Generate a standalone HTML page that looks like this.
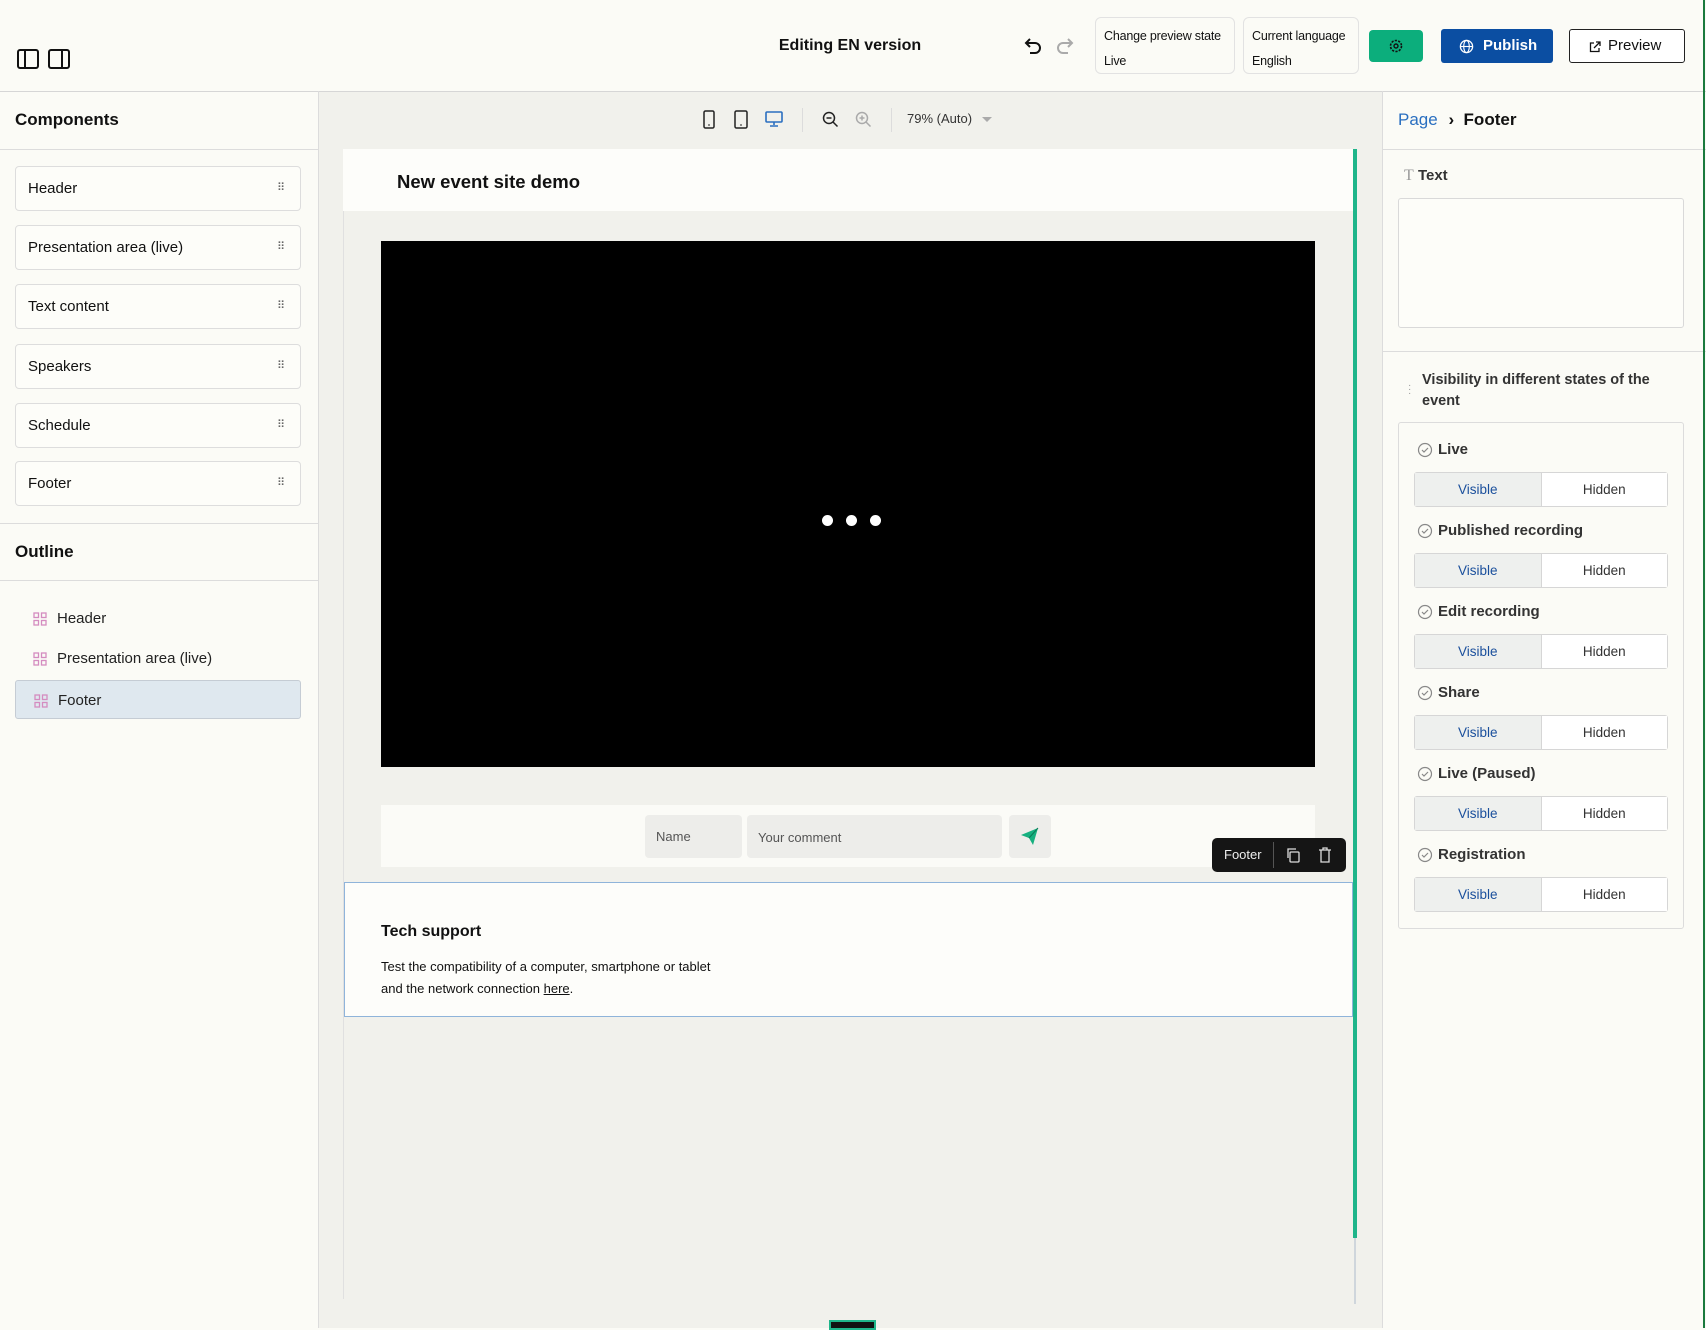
<!DOCTYPE html>
<html><head><meta charset="utf-8"><style>
*{box-sizing:border-box;margin:0;padding:0}
body{width:1706px;height:1328px;position:relative;overflow:hidden;font-family:"Liberation Sans",Arial,sans-serif;color:#111;background:#fbfbf6;font-size:15px}
.a{position:absolute}
.hl{position:absolute;height:1px;background:#dcdcdc}
.vl{position:absolute;width:1px;background:#dcdcdc}
.comp{position:absolute;left:15px;width:286px;height:45px;border:1px solid #ddd;border-radius:4px;background:#fdfdf9;padding:0 12px;line-height:43px;font-size:15px}
.comp .g{position:absolute;right:16px;top:0;font-size:11px;color:#666;letter-spacing:-1px}
.ol{position:absolute;left:15px;width:286px;height:39px;line-height:39px;padding-left:42px;font-size:15px;color:#222}
.ol svg{position:absolute;left:18px;top:13px}
.st{position:absolute;left:1417px;font-weight:bold;font-size:15px;color:#333;padding-left:21px}
.st svg{position:absolute;left:0;top:1px}
.seg{position:absolute;left:1414px;width:254px;height:35px;border:1px solid #d6d6d6;border-radius:3px;display:flex;font-size:13.5px}
.seg div{flex:1;text-align:center;line-height:33px}
.seg .v{background:#eef0ee;color:#1a4f9c;border-right:1px solid #d6d6d6}
.seg .h{background:#fff;color:#333}
.box{position:absolute;top:17px;height:57px;border:1px solid #e2e2e2;border-radius:6px;font-size:12.5px;padding:6px 8px;line-height:25px;white-space:nowrap;overflow:hidden;letter-spacing:-0.2px}
</style></head><body>
<!-- top bar -->
<svg class="a" style="left:17px;top:49px" width="22" height="20" viewBox="0 0 22 20"><rect x="1" y="1" width="20" height="18" rx="2" fill="none" stroke="#111" stroke-width="2"/><line x1="8" y1="1" x2="8" y2="19" stroke="#111" stroke-width="2"/></svg>
<svg class="a" style="left:48px;top:49px" width="22" height="20" viewBox="0 0 22 20"><rect x="1" y="1" width="20" height="18" rx="2" fill="none" stroke="#111" stroke-width="2"/><line x1="14" y1="1" x2="14" y2="19" stroke="#111" stroke-width="2"/></svg>
<div class="a" style="left:700px;top:37px;width:300px;text-align:center;font-weight:bold;font-size:16px">Editing EN version</div>
<svg class="a" style="left:1024px;top:36px" width="20" height="20" viewBox="0 0 20 20"><path d="M6 3L2 7l4 4" fill="none" stroke="#111" stroke-width="2"/><path d="M2 7h9a5 5 0 010 10H6" fill="none" stroke="#111" stroke-width="2"/></svg>
<svg class="a" style="left:1054px;top:36px" width="20" height="20" viewBox="0 0 20 20"><path d="M14 3l4 4-4 4" fill="none" stroke="#aaa" stroke-width="2"/><path d="M18 7H9a5 5 0 000 10h5" fill="none" stroke="#aaa" stroke-width="2"/></svg>
<div class="box" style="left:1095px;width:140px">Change preview state<br>Live</div>
<div class="box" style="left:1243px;width:116px">Current language<br>English</div>
<div class="a" style="left:1369px;top:30px;width:54px;height:32px;background:#0cae7c;border-radius:4px"></div>
<svg class="a" style="left:1388px;top:38px" width="16" height="16" viewBox="0 0 16 16"><circle cx="8" cy="8" r="5.5" fill="none" stroke="#111" stroke-width="1.6" stroke-dasharray="2.2 1.3"/><circle cx="8" cy="8" r="2" fill="none" stroke="#111" stroke-width="1.4"/></svg>
<div class="a" style="left:1441px;top:29px;width:112px;height:34px;background:#0b4ea2;border-radius:3px;color:#fff;font-weight:bold;font-size:15px;line-height:34px;padding-left:42px">Publish</div>
<svg class="a" style="left:1459px;top:39px" width="15" height="15" viewBox="0 0 16 16"><circle cx="8" cy="8" r="6.5" fill="none" stroke="#fff" stroke-width="1.4"/><ellipse cx="8" cy="8" rx="3" ry="6.5" fill="none" stroke="#fff" stroke-width="1.2"/><line x1="1.5" y1="8" x2="14.5" y2="8" stroke="#fff" stroke-width="1.2"/></svg>
<div class="a" style="left:1569px;top:29px;width:116px;height:34px;border:1px solid #222;border-radius:3px;background:#fff;font-size:15px;line-height:32px;padding-left:38px">Preview</div>
<svg class="a" style="left:1589px;top:41px" width="12" height="12" viewBox="0 0 12 12"><path d="M5 2H1.5v8.5H10V7M7 1h4v4M11 1L5 7" fill="none" stroke="#111" stroke-width="1.3"/></svg>
<div class="hl" style="left:0;top:91px;width:1706px;background:#d6d6d6"></div>

<!-- left panel -->
<div class="vl" style="left:318px;top:91px;height:1237px"></div>
<div class="a" style="left:15px;top:110px;font-weight:bold;font-size:17px">Components</div>
<div class="hl" style="left:0;top:149px;width:318px"></div>
<div class="comp" style="top:166px">Header<span class="g">⠿</span></div>
<div class="comp" style="top:225px">Presentation area (live)<span class="g">⠿</span></div>
<div class="comp" style="top:284px">Text content<span class="g">⠿</span></div>
<div class="comp" style="top:344px">Speakers<span class="g">⠿</span></div>
<div class="comp" style="top:403px">Schedule<span class="g">⠿</span></div>
<div class="comp" style="top:461px">Footer<span class="g">⠿</span></div>
<div class="hl" style="left:0;top:523px;width:318px"></div>
<div class="a" style="left:15px;top:542px;font-weight:bold;font-size:17px">Outline</div>
<div class="hl" style="left:0;top:580px;width:318px"></div>
<div class="ol" style="top:599px"><svg width="14" height="14" viewBox="0 0 14 14"><g fill="none" stroke="#d48cc0" stroke-width="1.3"><rect x="1" y="1" width="4.5" height="4.5"/><rect x="8.5" y="1" width="4.5" height="4.5"/><rect x="1" y="8.5" width="4.5" height="4.5"/><rect x="8.5" y="8.5" width="4.5" height="4.5"/></g></svg>Header</div>
<div class="ol" style="top:639px"><svg width="14" height="14" viewBox="0 0 14 14"><g fill="none" stroke="#d48cc0" stroke-width="1.3"><rect x="1" y="1" width="4.5" height="4.5"/><rect x="8.5" y="1" width="4.5" height="4.5"/><rect x="1" y="8.5" width="4.5" height="4.5"/><rect x="8.5" y="8.5" width="4.5" height="4.5"/></g></svg>Presentation area (live)</div>
<div class="ol" style="top:680px;background:#dfe8ef;border:1px solid #c5ccd4;border-radius:3px"><svg width="14" height="14" viewBox="0 0 14 14"><g fill="none" stroke="#d48cc0" stroke-width="1.3"><rect x="1" y="1" width="4.5" height="4.5"/><rect x="8.5" y="1" width="4.5" height="4.5"/><rect x="1" y="8.5" width="4.5" height="4.5"/><rect x="8.5" y="8.5" width="4.5" height="4.5"/></g></svg>Footer</div>

<!-- canvas -->
<div class="a" style="left:319px;top:92px;width:1063px;height:1236px;background:#f1f1ec"></div>
<svg class="a" style="left:702px;top:110px" width="14" height="19" viewBox="0 0 14 19"><rect x="2" y="1" width="10" height="17" rx="1.5" fill="none" stroke="#222" stroke-width="1.5"/><line x1="6" y1="15" x2="8" y2="15" stroke="#222"/></svg>
<svg class="a" style="left:733px;top:110px" width="16" height="19" viewBox="0 0 16 19"><rect x="2" y="1" width="12" height="17" rx="1.5" fill="none" stroke="#222" stroke-width="1.5"/><line x1="7" y1="15" x2="9" y2="15" stroke="#222"/></svg>
<svg class="a" style="left:765px;top:111px" width="18" height="16" viewBox="0 0 18 16"><rect x="1" y="1" width="16" height="10" rx="1" fill="none" stroke="#2a6fc0" stroke-width="1.6"/><path d="M9 11v3M5 15h8" stroke="#2a6fc0" stroke-width="1.6"/></svg>
<div class="vl" style="left:802px;top:108px;height:24px"></div>
<svg class="a" style="left:822px;top:111px" width="17" height="17" viewBox="0 0 17 17"><circle cx="7" cy="7" r="5.5" fill="none" stroke="#222" stroke-width="1.5"/><path d="M11 11l4.5 4.5M4.5 7h5" stroke="#222" stroke-width="1.5"/></svg>
<svg class="a" style="left:855px;top:111px" width="17" height="17" viewBox="0 0 17 17"><circle cx="7" cy="7" r="5.5" fill="none" stroke="#aaa" stroke-width="1.5"/><path d="M11 11l4.5 4.5M4.5 7h5M7 4.5v5" stroke="#aaa" stroke-width="1.5"/></svg>
<div class="vl" style="left:891px;top:108px;height:24px"></div>
<div class="a" style="left:907px;top:111px;font-size:13px;color:#333">79% (Auto)</div>
<div class="a" style="left:982px;top:117px;width:0;height:0;border-left:5px solid transparent;border-right:5px solid transparent;border-top:5px solid #aaa"></div>

<div class="a" style="left:343px;top:149px;width:1012px;height:1150px;border-left:1px solid #e0e0e0;border-right:1px solid #e0e0e0"></div>
<div class="a" style="left:343px;top:149px;width:1012px;height:62px;background:#fdfdfa"></div>
<div class="a" style="left:397px;top:171px;font-weight:bold;font-size:18.5px">New event site demo</div>
<div class="a" style="left:1353px;top:149px;width:4px;height:1089px;background:#1fb58a"></div>
<div class="a" style="left:1354px;top:1238px;width:2px;height:66px;background:#cfd6dc"></div>
<div class="a" style="left:381px;top:241px;width:934px;height:526px;background:#000"></div>
<div class="a" style="left:822px;top:515px;width:11px;height:11px;border-radius:50%;background:#fff"></div>
<div class="a" style="left:846px;top:515px;width:11px;height:11px;border-radius:50%;background:#fff"></div>
<div class="a" style="left:870px;top:515px;width:11px;height:11px;border-radius:50%;background:#fff"></div>

<div class="a" style="left:381px;top:805px;width:934px;height:62px;background:#fbfbf7"></div>
<div class="a" style="left:645px;top:815px;width:97px;height:43px;background:#ededea;border-radius:4px;font-size:13px;color:#555;padding:14px 11px">Name</div>
<div class="a" style="left:747px;top:815px;width:255px;height:43px;background:#ededea;border-radius:4px;font-size:13px;color:#555;padding:15px 11px">Your comment</div>
<div class="a" style="left:1009px;top:815px;width:42px;height:43px;background:#ededea;border-radius:4px"></div>
<svg class="a" style="left:1020px;top:827px" width="19" height="19" viewBox="0 0 19 19"><path d="M1 8L18 1l-5 17-4-7z" fill="#16b07f"/><path d="M9 11l9-10" stroke="#0b7a56" stroke-width="1"/></svg>

<div class="a" style="left:344px;top:882px;width:1009px;height:135px;border:1.5px solid #8fb4da;background:#fdfdfa"></div>
<div class="a" style="left:381px;top:923px;font-weight:bold;font-size:16px">Tech support</div>
<div class="a" style="left:381px;top:956px;font-size:13px;line-height:22px">Test the compatibility of a computer, smartphone or tablet<br>and the network connection <u>here</u>.</div>

<div class="a" style="left:1212px;top:838px;width:134px;height:34px;background:#151515;border-radius:5px"></div>
<div class="a" style="left:1224px;top:847px;color:#eee;font-size:13px">Footer</div>
<div class="a" style="left:1273px;top:842px;width:1px;height:26px;background:#555"></div>
<svg class="a" style="left:1285px;top:847px" width="16" height="16" viewBox="0 0 16 16"><rect x="5" y="5" width="9" height="10" rx="1" fill="none" stroke="#ddd" stroke-width="1.3"/><path d="M3 11V2h8" fill="none" stroke="#ddd" stroke-width="1.3"/></svg>
<svg class="a" style="left:1318px;top:846px" width="14" height="17" viewBox="0 0 14 17"><path d="M1 4h12M5 4V2h4v2M3 4v12h8V4" fill="none" stroke="#ddd" stroke-width="1.3"/></svg>
<div class="a" style="left:829px;top:1320px;width:47px;height:10px;background:#111;border:2px solid #1fb58a"></div>

<!-- right panel -->
<div class="vl" style="left:1382px;top:91px;height:1237px"></div>
<div class="a" style="left:1398px;top:110px;font-size:17px"><span style="color:#2a6fc0">Page</span> <span style="font-weight:bold;margin-left:6px">›&nbsp; Footer</span></div>
<div class="hl" style="left:1382px;top:149px;width:324px"></div>
<div class="a" style="left:1404px;top:167px;font-size:15px;font-weight:bold;color:#333"><span style="font-family:'Liberation Serif',serif;color:#999;font-weight:normal;font-size:16px">T</span> Text</div>
<div class="a" style="left:1398px;top:198px;width:286px;height:130px;border:1px solid #d9d9d9;border-radius:3px;background:#fdfdf9"></div>
<div class="hl" style="left:1382px;top:351px;width:324px"></div>
<div class="a" style="left:1408px;top:384px;color:#999;font-size:10px;line-height:4px">·<br>·<br>·</div>
<div class="a" style="left:1422px;top:370px;width:230px;font-weight:bold;font-size:14.5px;line-height:21px;color:#333">Visibility in different states of the event</div>
<div class="a" style="left:1398px;top:422px;width:286px;height:507px;border:1px solid #dcdcdc;border-radius:3px"></div>

<div class="st" style="top:441px"><svg width="16" height="16" viewBox="0 0 16 16"><circle cx="8" cy="8" r="6.5" fill="none" stroke="#888" stroke-width="1.2"/><path d="M5 8l2 2 4-4" fill="none" stroke="#888" stroke-width="1.2"/></svg>Live</div>
<div class="seg" style="top:472px"><div class="v">Visible</div><div class="h">Hidden</div></div>
<div class="st" style="top:522px"><svg width="16" height="16" viewBox="0 0 16 16"><circle cx="8" cy="8" r="6.5" fill="none" stroke="#888" stroke-width="1.2"/><path d="M5 8l2 2 4-4" fill="none" stroke="#888" stroke-width="1.2"/></svg>Published recording</div>
<div class="seg" style="top:553px"><div class="v">Visible</div><div class="h">Hidden</div></div>
<div class="st" style="top:603px"><svg width="16" height="16" viewBox="0 0 16 16"><circle cx="8" cy="8" r="6.5" fill="none" stroke="#888" stroke-width="1.2"/><path d="M5 8l2 2 4-4" fill="none" stroke="#888" stroke-width="1.2"/></svg>Edit recording</div>
<div class="seg" style="top:634px"><div class="v">Visible</div><div class="h">Hidden</div></div>
<div class="st" style="top:684px"><svg width="16" height="16" viewBox="0 0 16 16"><circle cx="8" cy="8" r="6.5" fill="none" stroke="#888" stroke-width="1.2"/><path d="M5 8l2 2 4-4" fill="none" stroke="#888" stroke-width="1.2"/></svg>Share</div>
<div class="seg" style="top:715px"><div class="v">Visible</div><div class="h">Hidden</div></div>
<div class="st" style="top:765px"><svg width="16" height="16" viewBox="0 0 16 16"><circle cx="8" cy="8" r="6.5" fill="none" stroke="#888" stroke-width="1.2"/><path d="M5 8l2 2 4-4" fill="none" stroke="#888" stroke-width="1.2"/></svg>Live (Paused)</div>
<div class="seg" style="top:796px"><div class="v">Visible</div><div class="h">Hidden</div></div>
<div class="st" style="top:846px"><svg width="16" height="16" viewBox="0 0 16 16"><circle cx="8" cy="8" r="6.5" fill="none" stroke="#888" stroke-width="1.2"/><path d="M5 8l2 2 4-4" fill="none" stroke="#888" stroke-width="1.2"/></svg>Registration</div>
<div class="seg" style="top:877px"><div class="v">Visible</div><div class="h">Hidden</div></div>
<div class="a" style="left:1703px;top:0;width:2px;height:1328px;background:#1b7a3e"></div>
</body></html>
